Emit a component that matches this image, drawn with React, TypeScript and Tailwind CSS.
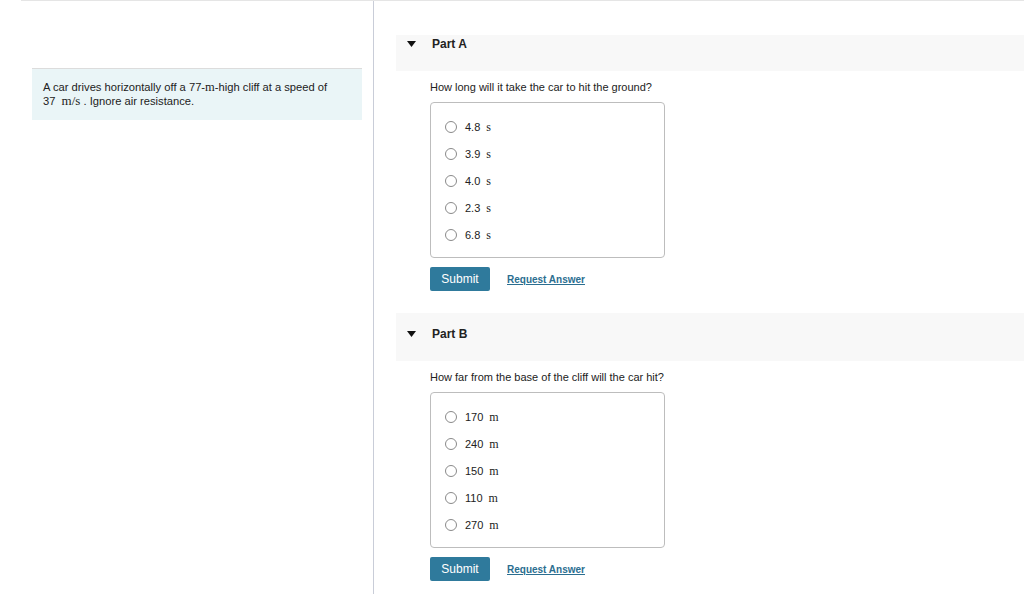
import React from "react";

type Option = { value: string; unit: string };

const partA: Option[] = [
  { value: "4.8", unit: "s" },
  { value: "3.9", unit: "s" },
  { value: "4.0", unit: "s" },
  { value: "2.3", unit: "s" },
  { value: "6.8", unit: "s" },
];

const partB: Option[] = [
  { value: "170", unit: "m" },
  { value: "240", unit: "m" },
  { value: "150", unit: "m" },
  { value: "110", unit: "m" },
  { value: "270", unit: "m" },
];

const Triangle = () => (
  <svg width="9" height="6" viewBox="0 0 9 6" className="shrink-0">
    <path d="M0 0 L9 0 L4.5 6 Z" fill="#111" />
  </svg>
);

const Part: React.FC<{
  title: string;
  question: string;
  options: Option[];
  headerClass: string;
}> = ({ title, question, options, headerClass }) => {
  return (
    <section>
      <div className={`flex items-start bg-[#f8f8f8] pl-[11px] ${headerClass}`}>
        <div className="flex items-center gap-[16px]">
          <Triangle />
          <span className="text-[12px] font-bold text-[#222]">{title}</span>
        </div>
      </div>
      <div className="pl-[34px]">
        <p className="mt-[10px] text-[11px] leading-[13px] text-[#222]">{question}</p>
        <div className="mt-[8px] w-[235px] h-[156px] rounded-[4px] border border-[#bdbdbd] pt-[10px] pl-[14px]">
          {options.map((o) => (
            <label key={o.value} className="flex items-center h-[27px]">
              <span className="w-[12px] h-[12px] rounded-full border border-[#8a8a8a] bg-white" />
              <span className="ml-[8px] text-[11px] text-[#222]">
                {o.value}
                <span className="ml-[6px] font-['Liberation_Serif',serif] text-[12px]">{o.unit}</span>
              </span>
            </label>
          ))}
        </div>
        <div className="mt-[9px] flex items-center">
          <button className="w-[60px] h-[24px] rounded-[2px] bg-[#2f7a9c] text-white text-[12px]">
            Submit
          </button>
          <a className="ml-[17px] text-[10px] font-bold text-[#2b6e90] underline">Request Answer</a>
        </div>
      </div>
    </section>
  );
};

export default function App() {
  return (
    <div className="w-[1024px] h-[594px] overflow-hidden bg-white font-['Liberation_Sans',Arial,sans-serif]">
      <div className="ml-[21px] h-px bg-[#e5e5e5]" />
      <div className="flex h-[593px]">
        <div className="w-[374px] shrink-0 border-r border-[#c9cdd8] pt-[67px] pl-[32px]">
          <div className="w-[330px] h-[52px] bg-[#eaf5f7] border-t border-[#dcdcdc] pt-[11px] pl-[11px] text-[11.2px] leading-[14px] text-[#222]">
            <p>
              A car drives horizontally off a 77-<span className="font-['Liberation_Serif',serif] text-[12.5px]">m</span>-high cliff at a speed of
            </p>
            <p>
              37 <span className="ml-[3px] font-['Liberation_Serif',serif] text-[13px]">m/s</span> . Ignore air resistance.
            </p>
          </div>
        </div>
        <div className="flex-1 pl-[22px] pt-[34px]">
          <Part
            title="Part A"
            question="How long will it take the car to hit the ground?"
            options={partA}
            headerClass="h-[36px] pt-0"
          />
          <div className="h-[22px]" />
          <Part
            title="Part B"
            question="How far from the base of the cliff will the car hit?"
            options={partB}
            headerClass="h-[48px] pt-[12px]"
          />
        </div>
      </div>
    </div>
  );
}
